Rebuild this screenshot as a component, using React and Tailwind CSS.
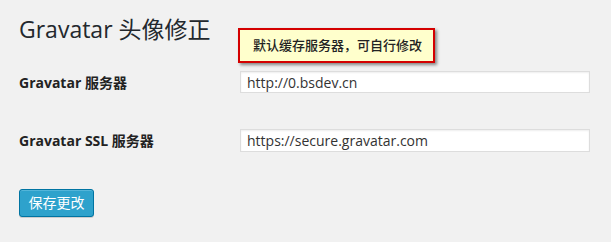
export default function App() {
  const font = { fontFamily: '"Open Sans", "Noto Sans CJK SC", sans-serif' };
  return (
    <div className="w-[611px] h-[242px] bg-[#f1f1f1] relative overflow-hidden text-[#222]" style={font}>
      <div className="pl-[19px] pt-[14px]">
        <h1 className="text-[23px] leading-[30px] font-normal text-[#23282d]">Gravatar 头像修正</h1>
        <div className="mt-[27px] flex items-center h-[22px]">
          <div className="w-[221px] text-[14px] font-bold text-[#222]">Gravatar 服务器</div>
          <div className="w-[350px] h-[22px] bg-white border border-[#ddd] shadow-[inset_0_1px_2px_rgba(0,0,0,0.07)] flex items-center pl-[6px] text-[14px] text-[#333]">http://0.bsdev.cn</div>
        </div>
        <div className="mt-[36px] flex items-center h-[23px]">
          <div className="w-[221px] text-[14px] font-bold text-[#222]">Gravatar SSL 服务器</div>
          <div className="w-[350px] h-[23px] bg-white border border-[#ddd] shadow-[inset_0_1px_2px_rgba(0,0,0,0.07)] flex items-center pl-[6px] text-[14px] text-[#333]">https://secure.gravatar.com</div>
        </div>
        <button className="mt-[37px] w-[75px] h-[28px] rounded-[3px] bg-[#2ea2cc] border border-[#0074a2] shadow-[inset_0_1px_0_rgba(120,200,230,0.5),0_1px_0_rgba(0,0,0,0.15)] text-white text-[14px] leading-none flex items-center justify-center">保存更改</button>
      </div>
      <div className="absolute left-[238px] top-[28px] w-[197px] h-[35px] bg-[#ffffcc] border-[2px] border-[#d40000] shadow-[2px_2px_3px_rgba(0,0,0,0.45)] flex items-center pl-[13px] text-[13px] font-medium text-[#222]">
        默认缓存服务器，可自行修改
      </div>
    </div>
  );
}
